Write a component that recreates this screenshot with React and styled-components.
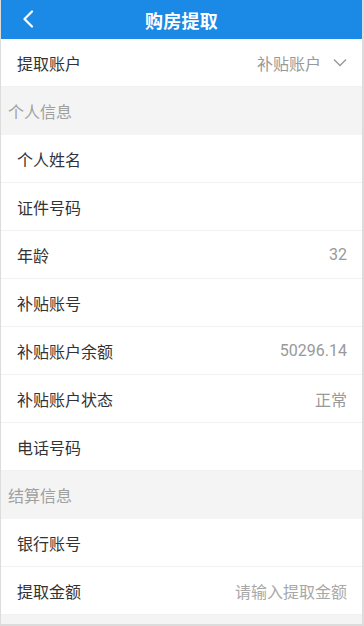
import React from "react";
import styled, { createGlobalStyle } from "styled-components";

const Global = createGlobalStyle`
  html, body { margin: 0; padding: 0; background: #fff; }
  body { font-family: "Noto Sans CJK SC", "Noto Sans", sans-serif; }
  * { box-sizing: border-box; }
`;

const Page = styled.div`
  width: 364px;
  height: 626px;
  background: #f4f4f4;
  border-left: 1px solid #dcdcdc;
  border-right: 2px solid #dcdcdc;
  border-bottom: 2px solid #dcdcdc;
  display: flex;
  flex-direction: column;
  overflow: hidden;
`;

const Header = styled.header`
  height: 39px;
  background: #1a8ae6;
  display: flex;
  align-items: center;
  justify-content: center;
  position: relative;
  flex-shrink: 0;
`;

const Back = styled.button`
  position: absolute;
  left: 16px;
  top: 7px;
  width: 22px;
  height: 24px;
  padding: 0;
  border: 0;
  background: none;
  display: flex;
  align-items: center;
  justify-content: center;
`;

const Title = styled.h1`
  margin: 0;
  color: #fff;
  font-size: 18px;
  font-weight: 700;
  letter-spacing: 0.2px;
`;

const Row = styled.div`
  height: 48px;
  background: #fff;
  display: flex;
  align-items: center;
  justify-content: space-between;
  padding: 0 15px 0 16px;
  border-bottom: 1px solid #f1f1f1;
  flex-shrink: 0;
`;

const Label = styled.span`
  font-size: 16px;
  color: #333;
`;

const Value = styled.span`
  font-size: 16px;
  color: ${(p) => (p.$placeholder ? "#a8a8a8" : "#999")};
  font-family: ${(p) =>
    p.$num ? '"Roboto", "Noto Sans", sans-serif' : '"Noto Sans CJK SC", sans-serif'};
  display: flex;
  align-items: center;
  gap: 12px;
`;

const SectionTitle = styled.div`
  height: 48px;
  display: flex;
  align-items: center;
  padding-left: 7px;
  font-size: 16px;
  color: #a0a0a0;
  background: #f4f4f4;
  flex-shrink: 0;
`;

const Chevron = () => (
  <svg width="14" height="9" viewBox="0 0 14 9">
    <path d="M1 1.5 L7 7.5 L13 1.5" fill="none" stroke="#9a9a9a" strokeWidth="1.4" />
  </svg>
);

const BackIcon = () => (
  <svg width="12" height="18" viewBox="0 0 12 18">
    <path d="M10 1.5 L2.5 9 L10 16.5" fill="none" stroke="#fff" strokeWidth="2.2" strokeLinecap="round" strokeLinejoin="round" />
  </svg>
);

const personal = [
  ["个人姓名", ""],
  ["证件号码", ""],
  ["年龄", "32", true],
  ["补贴账号", ""],
  ["补贴账户余额", "50296.14", true],
  ["补贴账户状态", "正常"],
  ["电话号码", ""],
];

export default function App() {
  return (
    <>
      <Global />
      <Page>
        <Header>
          <Back aria-label="返回">
            <BackIcon />
          </Back>
          <Title>购房提取</Title>
        </Header>
        <Row>
          <Label>提取账户</Label>
          <Value>
            补贴账户
            <Chevron />
          </Value>
        </Row>
        <SectionTitle>个人信息</SectionTitle>
        {personal.map(([l, v, num]) => (
          <Row key={l}>
            <Label>{l}</Label>
            <Value $num={num}>{v}</Value>
          </Row>
        ))}
        <SectionTitle>结算信息</SectionTitle>
        <Row>
          <Label>银行账号</Label>
          <Value />
        </Row>
        <Row>
          <Label>提取金额</Label>
          <Value $placeholder>请输入提取金额</Value>
        </Row>
      </Page>
    </>
  );
}
